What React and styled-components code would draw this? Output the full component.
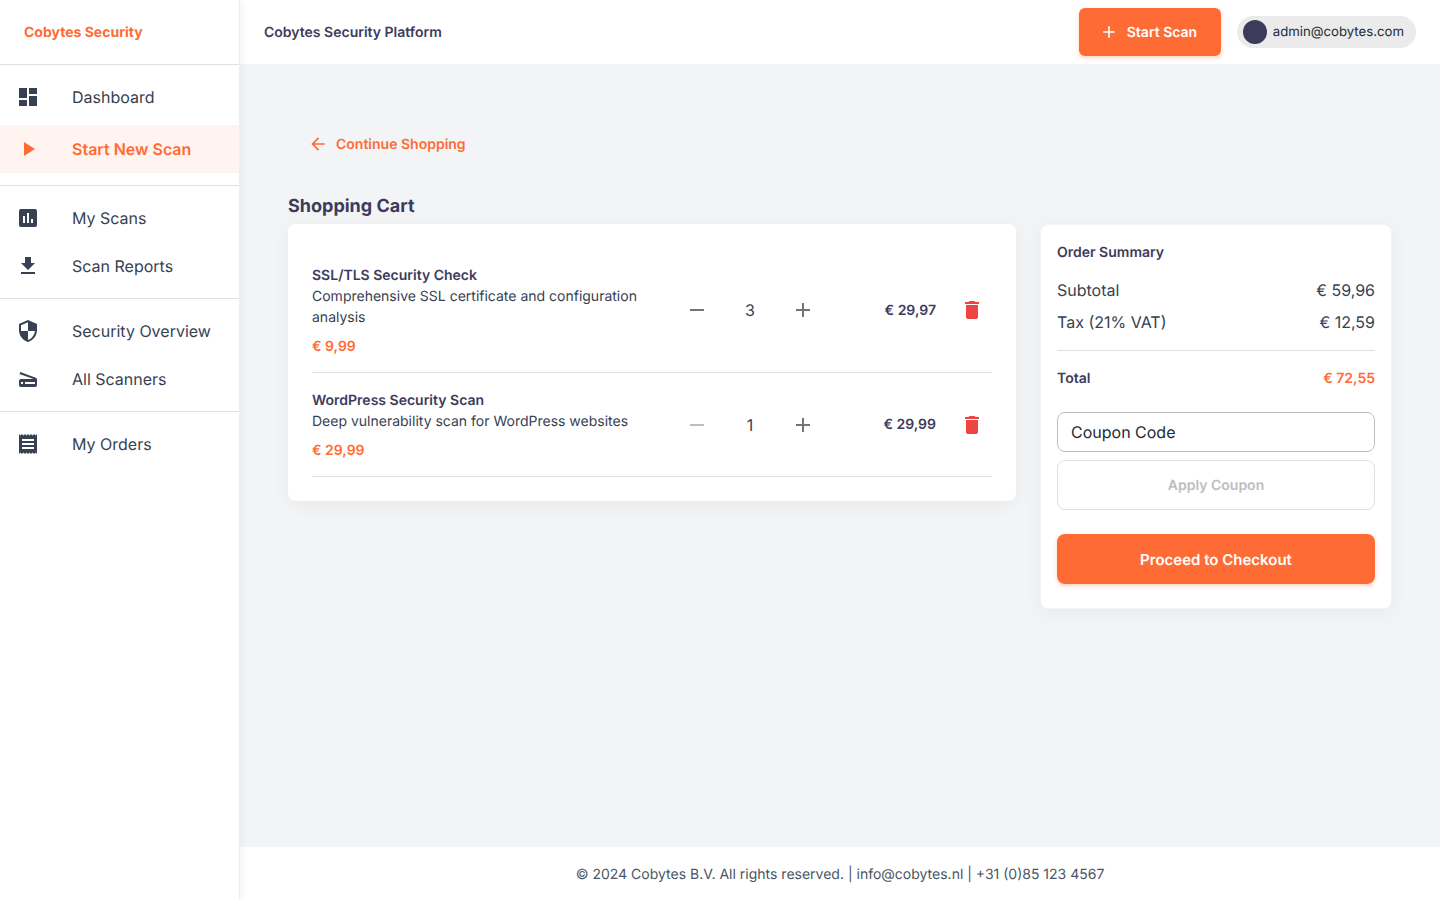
import React from 'react';
import styled, {createGlobalStyle} from 'styled-components';

const ORANGE = '#ff6b35';
const NAVY = '#3d3b5c';
const SLATE = '#374151';

const GlobalStyle = createGlobalStyle`
* { box-sizing: border-box; }
html, body { margin: 0; height: 100%; }
body {
  font-family: Inter, "Liberation Sans", sans-serif;
  line-height: 1.5;
  color: ${SLATE};
  background: #f3f4f6;
  text-rendering: geometricPrecision;
}
button, input { font-family: inherit; line-height: inherit; text-rendering: inherit; }
`;

const ICONS = {
    dashboard: 'M3 13h8V3H3v10zm0 8h8v-6H3v6zm10 0h8V11h-8v10zm0-18v6h8V3h-8z',
    play: 'M8 5v14l11-7z',
    assessment: 'M19 3H5c-1.1 0-2 .9-2 2v14c0 1.1.9 2 2 2h14c1.1 0 2-.9 2-2V5c0-1.1-.9-2-2-2zM9 17H7v-7h2v7zm4 0h-2V7h2v10zm4 0h-2v-4h2v4z',
    download: 'M19 9h-4V3H9v6H5l7 7 7-7zM5 18v2h14v-2H5z',
    security: 'M12 1L3 5v6c0 5.55 3.84 10.74 9 12 5.16-1.26 9-6.45 9-12V5l-9-4zm0 10.99h7c-.53 4.12-3.28 7.79-7 8.94V12H5V6.3l7-3.11v8.8z',
    scanner: 'M19.8 10.7L4.2 5l-.7 1.9L17.6 12H5c-1.1 0-2 .9-2 2v4c0 1.1.9 2 2 2h14c1.1 0 2-.9 2-2v-5.5c0-.8-.5-1.6-1.2-1.8zM7 17H5v-2h2v2zm12 0H9v-2h10v2z',
    receipt: 'M18 17H6v-2h12v2zm0-4H6v-2h12v2zm0-4H6V7h12v2zM3 22l1.5-1.5L6 22l1.5-1.5L9 22l1.5-1.5L12 22l1.5-1.5L15 22l1.5-1.5L18 22l1.5-1.5L21 22V2l-1.5 1.5L18 2l-1.5 1.5L15 2l-1.5 1.5L12 2l-1.5 1.5L9 2 7.5 3.5 6 2 4.5 3.5 3 2v20z',
    add: 'M19 13h-6v6h-2v-6H5v-2h6V5h2v6h6v2z',
    remove: 'M19 13H5v-2h14v2z',
    trash: 'M6 19c0 1.1.9 2 2 2h8c1.1 0 2-.9 2-2V7H6v12zM19 4h-3.5l-1-1h-5l-1 1H5v2h14V4z',
    back: 'M20 11H7.83l5.59-5.59L12 4l-8 8 8 8 1.41-1.41L7.83 13H20v-2z',
};

const Icon = ({name, size = 24}) => (
    <svg width={size} height={size} viewBox="0 0 24 24" fill="currentColor" aria-hidden="true">
        <path d={ICONS[name]}/>
    </svg>
);

const NAV_GROUPS = [
    [
        {icon: 'dashboard', label: 'Dashboard'},
        {icon: 'play', label: 'Start New Scan', active: true},
    ],
    [
        {icon: 'assessment', label: 'My Scans'},
        {icon: 'download', label: 'Scan Reports'},
    ],
    [
        {icon: 'security', label: 'Security Overview'},
        {icon: 'scanner', label: 'All Scanners'},
    ],
    [
        {icon: 'receipt', label: 'My Orders'},
    ],
];

const CART_ITEMS = [
    {
        name: 'SSL/TLS Security Check',
        description: 'Comprehensive SSL certificate and configuration analysis',
        price: '€ 9,99',
        qty: 3,
        total: '€ 29,97',
    },
    {
        name: 'WordPress Security Scan',
        description: 'Deep vulnerability scan for WordPress websites',
        price: '€ 29,99',
        qty: 1,
        total: '€ 29,99',
    },
];

const Shell = styled.div`
display: flex;
min-height: 900px;
`;

const Sidebar = styled.aside`
flex: 0 0 240px;
width: 240px;
background: #fff;
border-right: 1px solid #eceef0;
box-shadow: 2px 0 8px rgba(0, 0, 0, 0.05);
position: relative;
z-index: 2;
`;

const Brand = styled.div`
height: 65px;
padding: 0 24px;
display: flex;
align-items: center;
font-size: 14px;
font-weight: 700;
color: ${ORANGE};
border-bottom: 1px solid #e0e0e0;
`;

const NavGroup = styled.ul`
list-style: none;
margin: 0;
padding: 8px 0;
border-bottom: ${p => (p.$last ? 'none' : '1px solid #e0e0e0')};
`;

const NavItem = styled.li`
height: 48px;
margin: ${p => (p.$active ? '4px 0' : '0')};
padding: 0 16px;
display: flex;
align-items: center;
font-size: 16px;
font-weight: ${p => (p.$active ? 600 : 400)};
color: ${p => (p.$active ? ORANGE : SLATE)};
background: ${p => (p.$active ? '#fff4f0' : 'transparent')};
`;

const NavIcon = styled.span`
flex: 0 0 56px;
display: flex;
align-items: center;
`;

const Body = styled.div`
flex: 1;
min-width: 0;
display: flex;
flex-direction: column;
`;

const Header = styled.header`
height: 64px;
padding: 0 24px;
background: #fff;
display: flex;
align-items: center;
justify-content: space-between;
`;

const HeaderTitle = styled.div`
font-size: 14px;
font-weight: 600;
color: ${NAVY};
`;

const HeaderActions = styled.div`
display: flex;
align-items: center;
gap: 16px;
`;

const ScanButton = styled.button`
height: 48px;
width: 142px;
padding: 0 0 0 20px;
border: none;
border-radius: 6px;
background: ${ORANGE};
color: #fff;
font-size: 14px;
font-weight: 600;
white-space: nowrap;
display: flex;
align-items: center;
gap: 8px;
box-shadow: 0 2px 4px rgba(255, 107, 53, 0.3);
`;

const UserPill = styled.div`
height: 32px;
padding: 0 12px 0 6px;
border-radius: 16px;
background: #ebebeb;
display: flex;
align-items: center;
gap: 6px;
font-size: 13.2px;
color: #1f2937;
`;

const UserEmail = styled.span`
padding-top: 2px;
`;

const Avatar = styled.span`
width: 24px;
height: 24px;
border-radius: 50%;
background: ${NAVY};
`;

const Main = styled.main`
flex: 1;
padding: 64px 48px 0;
`;

const BackLink = styled.a`
height: 32px;
margin: 0 0 32px;
padding: 0 20px;
display: inline-flex;
align-items: center;
gap: 8px;
font-size: 14px;
font-weight: 600;
color: ${ORANGE};
`;

const Columns = styled.div`
display: grid;
grid-template-columns: 728px 352px;
gap: 24px;
width: 1104px;
`;

const CartHeading = styled.h2`
margin: 1px 0 4px;
font-size: 18px;
line-height: 27px;
font-weight: 700;
color: ${NAVY};
`;

const Card = styled.section`
background: #fff;
border-radius: 8px;
box-shadow: 0 4px 20px rgba(0, 0, 0, 0.05);
padding: 24px;
`;

const SummaryColumn = styled.div`
padding-top: 32px;
`;

const SummaryCard = styled(Card)`
padding: 16px;
border: 1px solid #f3f4f6;
`;

const CartRow = styled.div`
padding: 16px 0;
display: flex;
align-items: center;
border-bottom: 1px solid #e0e0e0;
`;

const ItemInfo = styled.div`
flex: 1;
min-width: 0;
padding: 1px 16px 0 0;
margin-bottom: -1px;
font-size: 14px;
line-height: 21px;
color: ${SLATE};
`;

const ItemName = styled.div`
font-weight: 600;
color: ${NAVY};
`;

const ItemPrice = styled.div`
margin-top: 8px;
font-weight: 600;
color: ${ORANGE};
`;

const QtyControl = styled.div`
flex: 0 0 146px;
display: flex;
align-items: center;
`;

const IconButton = styled.button`
width: 40px;
height: 40px;
padding: 0;
border: none;
background: transparent;
display: flex;
align-items: center;
justify-content: center;
color: ${p => p.$color};
`;

const QtyValue = styled.span`
flex: 1;
text-align: center;
font-size: 16px;
color: ${SLATE};
`;

const LineTotal = styled.div`
flex: 0 0 113px;
text-align: right;
font-size: 14px;
font-weight: 600;
color: ${NAVY};
`;

const DeleteSlot = styled.div`
margin-left: 16px;
`;

const SummaryTitle = styled.h3`
margin: 1px 0 11px;
font-size: 14px;
line-height: 21px;
font-weight: 600;
color: ${NAVY};
`;

const SummaryRow = styled.div`
height: 32px;
display: flex;
align-items: center;
justify-content: space-between;
font-size: 16px;
color: ${SLATE};
`;

const SummaryDivider = styled.hr`
margin: 12px 0;
border: none;
border-top: 1px solid #e0e0e0;
`;

const TotalRow = styled.div`
height: 30px;
margin-bottom: 19px;
display: flex;
align-items: center;
justify-content: space-between;
font-size: 14px;
font-weight: 600;
color: ${NAVY};
`;

const TotalValue = styled.span`
color: ${ORANGE};
`;

const CouponInput = styled.input`
display: block;
width: 100%;
height: 40px;
padding: 0 13px;
border: 1px solid #bdbdbd;
border-radius: 8px;
background: #fff;
font-size: 16px;
color: ${SLATE};
&::placeholder {
  color: #1f2937;
  opacity: 1;
}
`;

const ApplyButton = styled.button`
display: block;
width: 100%;
height: 50px;
margin-top: 8px;
border: 1px solid #e0e0e0;
border-radius: 8px;
background: #fff;
font-size: 14px;
font-weight: 600;
color: #bdbdbd;
`;

const CheckoutButton = styled.button`
display: block;
width: 100%;
height: 50px;
margin: 24px 0 8px;
padding: 2px 0 0;
border: none;
border-radius: 8px;
background: ${ORANGE};
color: #fff;
font-size: 15px;
font-weight: 600;
box-shadow: 0 2px 4px rgba(255, 107, 53, 0.3);
`;

const Footer = styled.footer`
height: 53px;
padding-top: 2px;
background: #fff;
display: flex;
align-items: center;
justify-content: center;
font-size: 14px;
color: #4b5563;
`;

function CartLine({item}) {
    return (
        <CartRow>
            <ItemInfo>
                <ItemName>{item.name}</ItemName>
                <div>{item.description}</div>
                <ItemPrice>{item.price}</ItemPrice>
            </ItemInfo>
            <QtyControl>
                <IconButton $color={item.qty > 1 ? 'rgba(0,0,0,0.54)' : 'rgba(0,0,0,0.26)'} disabled={item.qty <= 1}>
                    <Icon name="remove"/>
                </IconButton>
                <QtyValue>{item.qty}</QtyValue>
                <IconButton $color="rgba(0,0,0,0.54)">
                    <Icon name="add"/>
                </IconButton>
            </QtyControl>
            <LineTotal>{item.total}</LineTotal>
            <DeleteSlot>
                <IconButton $color="#ef4444">
                    <Icon name="trash"/>
                </IconButton>
            </DeleteSlot>
        </CartRow>
    );
}

export default function App() {
    return (
        <Shell>
            <GlobalStyle/>
            <Sidebar>
                <Brand>Cobytes Security</Brand>
                {NAV_GROUPS.map((group, i) => (
                    <NavGroup key={i} $last={i === NAV_GROUPS.length - 1}>
                        {group.map(item => (
                            <NavItem key={item.label} $active={item.active}>
                                <NavIcon><Icon name={item.icon}/></NavIcon>
                                {item.label}
                            </NavItem>
                        ))}
                    </NavGroup>
                ))}
            </Sidebar>
            <Body>
                <Header>
                    <HeaderTitle>Cobytes Security Platform</HeaderTitle>
                    <HeaderActions>
                        <ScanButton><Icon name="add" size={20}/>Start Scan</ScanButton>
                        <UserPill><Avatar/><UserEmail>admin@cobytes.com</UserEmail></UserPill>
                    </HeaderActions>
                </Header>
                <Main>
                    <BackLink><Icon name="back" size={20}/>Continue Shopping</BackLink>
                    <Columns>
                        <div>
                            <CartHeading>Shopping Cart</CartHeading>
                            <Card>
                                {CART_ITEMS.map(item => <CartLine key={item.name} item={item}/>)}
                            </Card>
                        </div>
                        <SummaryColumn>
                            <SummaryCard>
                                <SummaryTitle>Order Summary</SummaryTitle>
                                <SummaryRow><span>Subtotal</span><span>€ 59,96</span></SummaryRow>
                                <SummaryRow><span>Tax (21% VAT)</span><span>€ 12,59</span></SummaryRow>
                                <SummaryDivider/>
                                <TotalRow><span>Total</span><TotalValue>€ 72,55</TotalValue></TotalRow>
                                <CouponInput placeholder="Coupon Code"/>
                                <ApplyButton disabled>Apply Coupon</ApplyButton>
                                <CheckoutButton>Proceed to Checkout</CheckoutButton>
                            </SummaryCard>
                        </SummaryColumn>
                    </Columns>
                </Main>
                <Footer>© 2024 Cobytes B.V. All rights reserved. | info@cobytes.nl | +31 (0)85 123 4567</Footer>
            </Body>
        </Shell>
    );
}
